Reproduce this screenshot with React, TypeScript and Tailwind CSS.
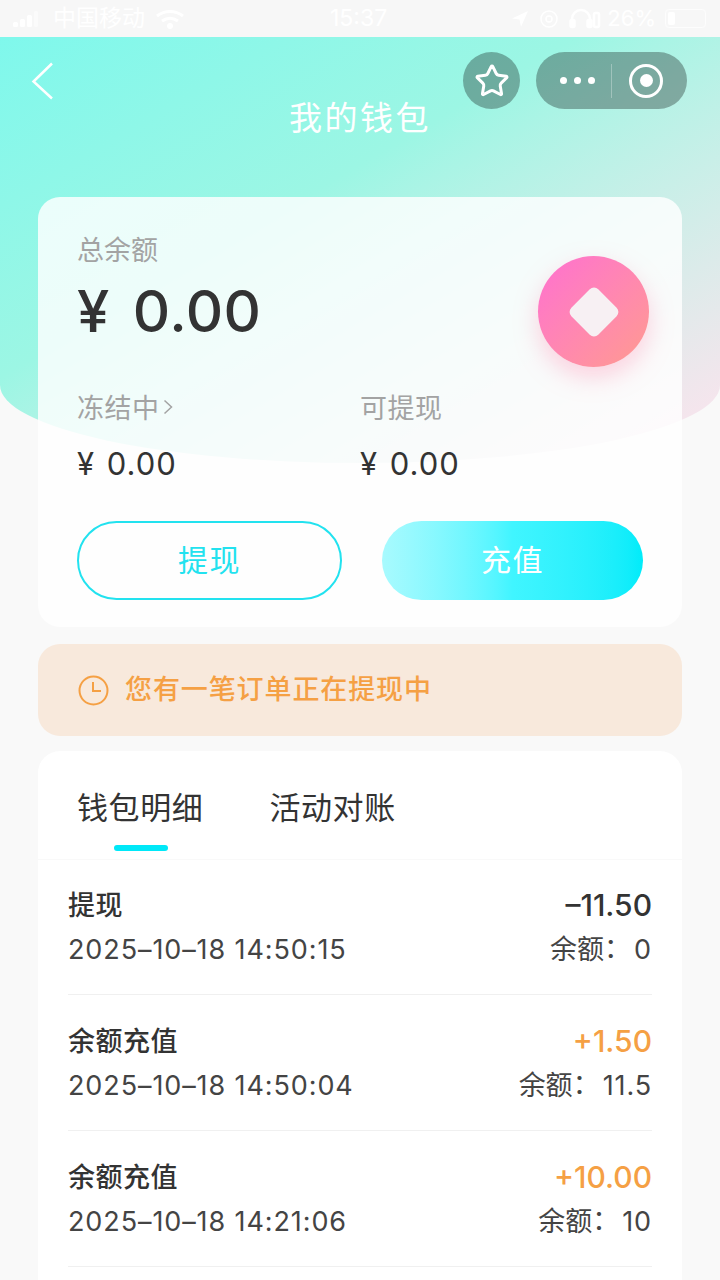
import { Star } from "lucide-react";

const FONT = "font-['Inter','Noto_Sans_CJK_SC',sans-serif]";

type Row = { title: string; time: string; amount: string; balance: string; income: boolean };

const rows: Row[] = [
  { title: "提现", time: "2025–10–18 14:50:15", amount: "–11.50", balance: "0", income: false },
  { title: "余额充值", time: "2025–10–18 14:50:04", amount: "+1.50", balance: "11.5", income: true },
  { title: "余额充值", time: "2025–10–18 14:21:06", amount: "+10.00", balance: "10", income: true },
];

function StatusBar() {
  return (
    <div className="relative flex h-[37px] items-center justify-between bg-[#f7f7f7] pl-3 pr-[14px] text-[23px] text-white">
      <div className="flex items-center gap-[10px]">
        <svg width="26" height="18" viewBox="0 0 26 18" fill="white">
          <rect x="1" y="12" width="5" height="5" rx="1.5" />
          <rect x="8" y="9" width="5" height="8" rx="1.5" />
          <rect x="15" y="5" width="5" height="12" rx="1.5" />
          <rect x="22" y="1" width="4" height="16" rx="1.5" opacity="0.5" />
        </svg>
        <span className="ml-[5px]">中国移动</span>
        <svg width="30" height="20" viewBox="0 0 30 20" fill="none" stroke="white" strokeWidth="3">
          <path d="M2 7c8-6 18-6 26 0" />
          <path d="M7 12c5-3.500 11-3.500 16 0" />
          <circle cx="15" cy="17" r="1.500" fill="white" />
        </svg>
      </div>
      <span className="absolute left-[330px] top-[1px]">15:37</span>
      <div className="flex items-center gap-[6px] text-[22px]">
        <svg width="18" height="18" viewBox="0 0 18 18" fill="white">
          <path d="M17 1 1 8.500l7.500 1L10 17z" />
        </svg>
        <svg width="20" height="20" viewBox="0 0 20 20" fill="none" stroke="white" strokeWidth="1.500" className="ml-1">
          <circle cx="10" cy="10" r="8" />
          <circle cx="10" cy="10" r="3" />
        </svg>
        <svg width="32" height="22" viewBox="0 0 32 22" fill="none" stroke="white" strokeWidth="2.500" className="ml-1">
          <path d="M3 18V11a9 9 0 0 1 18 0v7" />
          <rect x="1.500" y="12" width="4" height="7" rx="1.500" fill="white" />
          <rect x="18.500" y="12" width="4" height="7" rx="1.500" fill="white" />
          <rect x="25" y="5" width="5" height="14" rx="1.500" />
        </svg>
        <span>26%</span>
        <div className="ml-[3px] flex h-[19px] w-[41px] items-center rounded-[4px] border border-white/70 p-[2px]">
          <div className="h-full w-[7px] rounded-[2px] bg-white" />
        </div>
      </div>
    </div>
  );
}

function NavBar() {
  return (
    <div className="relative h-[160px]">
      <svg width="24" height="38" viewBox="0 0 24 38" fill="none" stroke="white" strokeWidth="2.500" className="absolute left-[31px] top-[25px]">
        <path d="M21 1.500 2.500 19.500 21 36.500" />
      </svg>
      <div className="absolute inset-x-0 top-[58px] text-center text-[33px] leading-[46px] tracking-[2.500px] text-white">
        我的钱包
      </div>
      <div className="absolute left-[463px] top-[15px] flex h-[57px] w-[57px] items-center justify-center rounded-full bg-black/30">
        <Star size={36} color="white" strokeWidth={2} />
      </div>
      <div className="absolute left-[536px] top-[15px] flex h-[57px] w-[151px] items-center rounded-full bg-black/30">
        <div className="flex w-[75px] items-center justify-center gap-[7px] pl-[7px]">
          <span className="h-[7px] w-[7px] rounded-full bg-white" />
          <span className="h-[7px] w-[7px] rounded-full bg-white" />
          <span className="h-[7px] w-[7px] rounded-full bg-white" />
        </div>
        <div className="h-[34px] w-px bg-white/30" />
        <div className="ml-[17px] flex h-[34px] w-[34px] items-center justify-center rounded-full border-[3px] border-white">
          <span className="h-[13px] w-[13px] rounded-full bg-white" />
        </div>
      </div>
    </div>
  );
}

function BalanceCard() {
  return (
    <div className="relative mx-[38px] h-[430px] rounded-[22px] bg-white/[0.82] pl-[39px] pr-[39px] pt-[36px]">
      <div className="text-[27px] leading-9 text-[#a3a3a3]">总余额</div>
      <div className="mt-[6px] text-[58px] font-medium leading-[72px] tracking-[0.500px] text-[#333] [word-spacing:7px]">¥ 0.00</div>
      <div className="absolute left-[500px] top-[59px] flex h-[111px] w-[111px] items-center justify-center rounded-full bg-gradient-to-br from-[#ff6fd0] to-[#ff9a8e] shadow-[0_10px_24px_rgba(255,130,170,0.35)]">
        <div className="h-[38px] w-[38px] rotate-45 rounded-[6px] bg-[#f7f0f3]" />
      </div>

      <div className="mt-[44px] grid grid-cols-[283px_1fr]">
        <div>
          <div className="flex items-center text-[27px] leading-9 tracking-[0.500px] text-[#a3a3a3]">
            冻结中
            <svg width="10" height="16" viewBox="0 0 10 16" fill="none" stroke="#a3a3a3" strokeWidth="1.500" className="ml-[3px] mb-[4px]">
              <path d="M1.500 1.500 8.500 8l-7 6.500" />
            </svg>
          </div>
          <div className="mt-[17px] text-[31px] leading-10 tracking-[1px] text-[#333] [word-spacing:2px]">¥ 0.00</div>
        </div>
        <div>
          <div className="text-[27px] leading-9 tracking-[0.500px] text-[#a3a3a3]">可提现</div>
          <div className="mt-[17px] text-[31px] leading-10 tracking-[1px] text-[#333] [word-spacing:2px]">¥ 0.00</div>
        </div>
      </div>

      <div className="mt-[37px] flex justify-between">
        <div className="flex h-[79px] w-[265px] items-center justify-center rounded-full border-2 border-[#22e2ef] text-[30px] tracking-[1.500px] text-[#22e2ef]">
          提现
        </div>
        <div className="flex h-[79px] w-[261px] items-center justify-center rounded-full bg-gradient-to-r from-[#a8fafe] via-[#40f5ff] to-[#00ecfa] text-[30px] tracking-[1.500px] text-white">
          充值
        </div>
      </div>
    </div>
  );
}

function Notice() {
  return (
    <div className="mx-[38px] mt-[17px] flex h-[92px] items-center rounded-[22px] bg-[#f8e9dc] pl-10 text-[#f5a044]">
      <svg width="31" height="31" viewBox="0 0 31 31" fill="none" stroke="#f5a044" strokeWidth="2">
        <circle cx="15.500" cy="15.500" r="14" />
        <path d="M15 7v9h8" />
      </svg>
      <span className="ml-[16px] pt-px text-[27px] font-medium tracking-[0.900px]">您有一笔订单正在提现中</span>
    </div>
  );
}

function RecordRow({ row }: { row: Row }) {
  return (
    <div className="flex h-[136px] items-start justify-between border-b border-[#f0f0f0] pt-[29px] first:h-[135px] first:pt-[28px]">
      <div>
        <div className="text-[27px] font-medium leading-9 tracking-[0.500px] text-[#333]">{row.title}</div>
        <div className="mt-[8px] text-[27px] leading-9 tracking-[0.900px] text-[#444]">{row.time}</div>
      </div>
      <div className="-mt-px text-right">
        <div className={`text-[30px] font-medium leading-9 ${row.income ? "text-[#f5a044]" : "text-[#333]"}`}>{row.amount}</div>
        <div className="mt-[9px] text-[27px] leading-9 text-[#444]">
          余额<span className="mr-[3px] inline-block -translate-y-px">：</span>
          <span className="tracking-[0.900px]">{row.balance}</span>
        </div>
      </div>
    </div>
  );
}

function Records() {
  return (
    <div className="mx-[38px] mt-[15px] rounded-t-[22px] bg-white">
      <div className="relative flex h-[109px] gap-[66px] border-b border-[#f9f9f9] pl-[39px] pt-[35px] text-[31px] leading-[44px] tracking-[0.600px] text-[#333]">
        <span>钱包明细</span>
        <span>活动对账</span>
        <div className="absolute left-[76px] top-[94px] h-[6px] w-[54px] rounded-full bg-[#00e8f8]" />
      </div>
      <div className="px-[30px] pb-10">
        {rows.map((row) => (
          <RecordRow key={row.time} row={row} />
        ))}
      </div>
    </div>
  );
}

export default function App() {
  return (
    <div className={`relative h-[1280px] w-[720px] overflow-hidden bg-[#f9f9f9] ${FONT}`}>
      <div className="absolute inset-x-0 top-[37px] h-[426px] rounded-b-[360px_78px] bg-gradient-to-br from-[#7ff8ec] via-[#9cf6e4] via-40% to-[#ffe2ee]" />
      <div className="relative">
        <StatusBar />
        <NavBar />
        <BalanceCard />
        <Notice />
        <Records />
      </div>
    </div>
  );
}
